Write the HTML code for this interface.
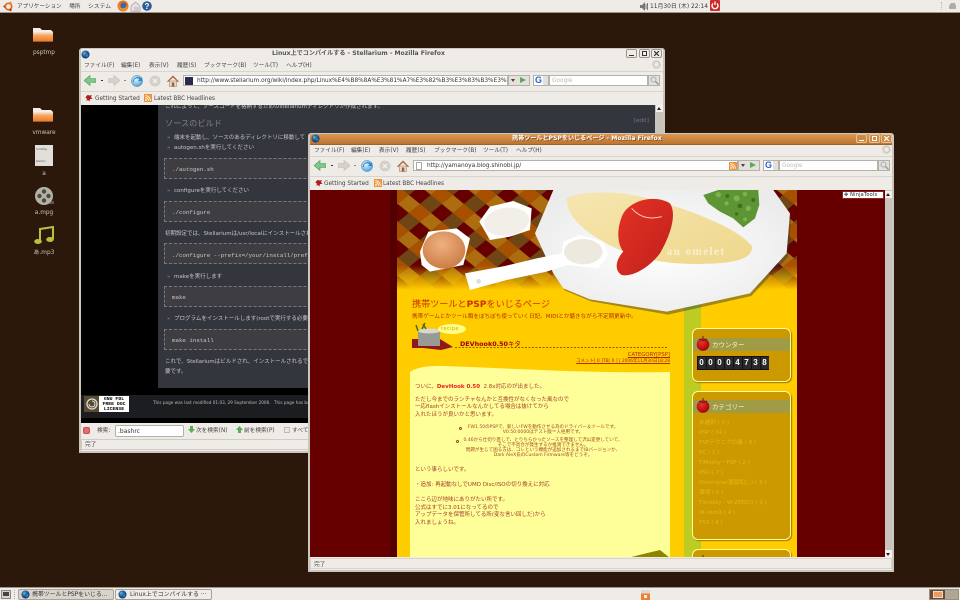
<!DOCTYPE html>
<html lang="ja"><head><meta charset="utf-8"><title>Desktop</title>
<style>
html,body{margin:0;padding:0;width:960px;height:600px;overflow:hidden;background:#2c170b}
body{position:relative;font-family:"DejaVu Sans","Noto Sans CJK JP",sans-serif;font-size:7px;color:#3c3c3c}
div,span,svg{box-sizing:border-box}
.a{position:absolute}
.t{position:absolute;white-space:nowrap;line-height:10px;height:10px;margin-top:1px}
.l{color:#c8c4bc;font-size:5.8px;text-align:center;width:50px}
.w{position:absolute;width:586px;background:#efebe7;overflow:hidden;border-radius:3px 3px 0 0;border:1px solid #cbc7c0;border-width:1px 2px 2px 2px}
.w .in{position:absolute;left:-2px;top:-1px;width:586px;height:100%}
.btn{position:absolute;top:1px;width:11px;height:9px;border:1px solid #9a958d;border-radius:2px;background:#efebe7}
.m{font-size:5.7px;color:#444}
.fld{position:absolute;background:#fff;border:1px solid #b5b0a8;height:11px}
.sep{position:absolute;left:2px;right:2px;height:1px;background:#d9d4cd}
.pr{position:absolute;left:83px;width:491px;background:#3e3e42;border:1px dashed #77777c;height:21px}
.c{color:#c6c6c6;font-size:5.5px}
.mo{font-family:"Liberation Mono",monospace;color:#c8c8c8;font-size:5.8px}
.b{color:#a23c2c;font-size:5.5px}
.s{color:#a2452c;font-size:4.55px;text-align:center;left:443px;width:200px}
.cat{color:#e8b80e;font-size:5.6px;left:699px}
.box{position:absolute;left:692px;width:99px;background:#cc9900;border:1.5px solid #ffff99;border-radius:6px;box-shadow:1px 1px 1px #a07800}
.band{position:absolute;left:693px;width:97px;height:13px;background:#a09c46}
.dg{position:absolute;top:357px;width:8px;height:12px;background:#2a2a2a;color:#fff;font:bold 8px/12px "Liberation Sans",sans-serif;text-align:center}
</style></head><body>
<svg width="0" height="0" style="position:absolute">
<defs>
<radialGradient id="gl" cx=".4" cy=".35" r=".7"><stop offset="0" stop-color="#3f8fe0"/><stop offset="1" stop-color="#062a70"/></radialGradient>
<radialGradient id="rg" cx=".4" cy=".35" r=".7"><stop offset="0" stop-color="#e8f4fb"/><stop offset="1" stop-color="#4a9bd4"/></radialGradient>
<linearGradient id="fo" x1="0" y1="0" x2="0" y2="1"><stop offset="0" stop-color="#f7e8d8"/><stop offset=".35" stop-color="#f6a763"/><stop offset="1" stop-color="#e87c28"/></linearGradient>
<radialGradient id="eg" cx=".45" cy=".35" r=".7"><stop offset="0" stop-color="#f0b080"/><stop offset="1" stop-color="#c87a42"/></radialGradient>
<radialGradient id="tm" cx=".4" cy=".35" r=".7"><stop offset="0" stop-color="#ee3030"/><stop offset="1" stop-color="#a00000"/></radialGradient>
<symbol id="globe" viewBox="0 0 10 10"><circle cx="5" cy="5" r="4.5" fill="url(#gl)"/><path d="M2 3l2-1 1 2-2 2zM6 6l2-1 0 2-2 1z" fill="#7cc07c" opacity=".6"/></symbol>
<symbol id="bk" viewBox="0 0 12 11"><path d="M0 5.5L6 .5v3h6v4H6v3z" fill="#7ec98a" stroke="#4a9a5c" stroke-width=".6"/></symbol>
<symbol id="fw" viewBox="0 0 12 11"><path d="M12 5.5L6 .5v3H0v4h6v3z" fill="#d6d2cb" stroke="#c0bbb3" stroke-width=".6"/></symbol>
<symbol id="rl" viewBox="0 0 12 12"><circle cx="6" cy="6" r="5.6" fill="url(#rg)" stroke="#3f8cc6" stroke-width=".5"/><path d="M3 7a3.2 3.2 0 0 1 5.6-2.6L7 6h4V2L9.6 3.2A4.6 4.6 0 0 0 2 7z" fill="#2f86c8"/></symbol>
<symbol id="st" viewBox="0 0 12 12"><circle cx="6" cy="6" r="5.5" fill="#d4d0c9"/><path d="M4 4l4 4M8 4l-4 4" stroke="#f2efea" stroke-width="1.4"/></symbol>
<symbol id="hm" viewBox="0 0 12 12"><path d="M2.5 6v5.5h7V6z" fill="#eadcc8" stroke="#94704a" stroke-width=".5"/><path d="M0 6.5L6 .5l6 6-1 .6L6 2.5 1 7.1z" fill="#b0603a"/><rect x="4.8" y="7.5" width="2.5" height="4" fill="#9a6236"/></symbol>
<symbol id="rss" viewBox="0 0 8 8"><rect width="8" height="8" rx="1" fill="#f09a3c" stroke="#c9803a" stroke-width=".4"/><circle cx="2" cy="6" r=".9" fill="#fff"/><path d="M1.2 3.4a3.5 3.5 0 0 1 3.4 3.4M1.2 1.6a5.2 5.2 0 0 1 5.2 5.2" stroke="#fff" stroke-width=".8" fill="none"/></symbol>
<symbol id="gs" viewBox="0 0 8 8"><path d="M1 2.5L2.5 1 5 1.5 7 1 6 3 7.5 5 5 5 4.5 7.5 3 6 1.5 7 2 4.5 .5 4z" fill="#b02020"/></symbol>
<symbol id="gear" viewBox="0 0 9 9"><circle cx="4.5" cy="4.5" r="3" fill="none" stroke="#cfcac3" stroke-width="1.5"/><circle cx="4.5" cy="4.5" r="4" fill="none" stroke="#cfcac3" stroke-width="1" stroke-dasharray="1.2 1"/></symbol>
<symbol id="fold" viewBox="0 0 20 16"><path d="M0 2h7l2 2h9l2 2v8.500H0z" fill="#f4eee6"/><rect y="6" width="20" height="9.500" fill="url(#fo)"/><rect y="15" width="20" height="1" fill="#a55818"/></symbol>
<symbol id="tom" viewBox="0 0 14 16"><circle cx="7" cy="9.500" r="6.300" fill="url(#tm)"/><path d="M7 1v3M3 4l4 1.500L11 4" stroke="#3c2a10" stroke-width=".9" fill="none"/></symbol>
<symbol id="ser" viewBox="0 0 11 11"><circle cx="4.500" cy="4.500" r="2.500" fill="none" stroke="#9fb0c4" stroke-width="1"/><path d="M6.500 6.500l3 3" stroke="#9a958d" stroke-width="1.300"/></symbol>
</defs></svg>

<!-- top panel -->
<div class="a" style="left:0;top:0;width:960px;height:13px;background:#efebe7;border-bottom:1px solid #9d968c"></div>
<svg class="a" style="left:3px;top:1px" width="11" height="11" viewBox="0 0 11 11"><circle cx="5.500" cy="5.500" r="3.200" fill="none" stroke="#dd6a1c" stroke-width="1.600"/><circle cx="1.500" cy="5.500" r="1.200" fill="#c94f12"/><circle cx="7.500" cy="2" r="1.200" fill="#e88a1c"/><circle cx="7.500" cy="9" r="1.200" fill="#c62a10"/></svg>
<div class="t m" style="left:17px;top:1px;font-size:5.6px;color:#3a3a3a">アプリケーション</div>
<div class="t m" style="left:69px;top:1px;font-size:5.8px">場所</div>
<div class="t m" style="left:88px;top:1px;font-size:5.8px">システム</div>
<svg class="a" style="left:117px;top:0" width="12" height="12" viewBox="0 0 12 12"><circle cx="6" cy="6" r="5.500" fill="#e8701c"/><circle cx="6.500" cy="5.500" r="3" fill="#3a68a8"/><path d="M1 7c1 3 5 5 8 3 2-1 2-4 1-5-1 3-4 4-6 3S2 6 3 3C1.500 4 1 5.500 1 7z" fill="#f09020"/></svg>
<svg class="a" style="left:130px;top:1px" width="11" height="11" viewBox="0 0 11 11"><path d="M1 5l4.500-4L10 5v5.500H1z" fill="#e6e1da" stroke="#9a93a0" stroke-width=".6"/><rect x="4" y="6" width="5" height="4" fill="#cfc8d8"/></svg>
<svg class="a" style="left:142px;top:1px" width="10" height="10" viewBox="0 0 10 10"><circle cx="5" cy="5" r="4.800" fill="#2a5c98"/><text x="5" y="8" text-anchor="middle" font-size="8" font-weight="bold" fill="#fff" font-family="Liberation Sans">?</text></svg>
<svg class="a" style="left:640px;top:2px" width="9" height="9" viewBox="0 0 9 9"><path d="M0 3h2l3-3v9L2 6H0z" fill="#777"/><path d="M6 2v5M7.500 1v7" stroke="#777"/></svg>
<div class="t m" style="left:650px;top:1px;font-size:5.9px;color:#3a3a3a">11月30日 (木) 22:14</div>
<div class="a" style="left:710px;top:0;width:10px;height:11px;background:#cf2a2a;border-radius:1px"></div>
<svg class="a" style="left:711px;top:1px" width="8" height="9" viewBox="0 0 8 9"><path d="M2 2.500a3 3 0 1 0 4 0" fill="none" stroke="#fff" stroke-width="1.400"/><path d="M4 .500v3.500" stroke="#fff" stroke-width="1.300"/></svg>
<div class="a" style="left:941px;top:2px;width:1px;height:8px;border-left:1px dotted #bbb"></div>
<svg class="a" style="left:948px;top:2px" width="9" height="8" viewBox="0 0 9 8"><path d="M1 7V4l2-3h4l1 3v3z" fill="#b0aca5"/></svg>

<!-- desktop icons -->
<svg class="a" style="left:33px;top:26px" width="20" height="16"><use href="#fold"/></svg>
<div class="t l" style="left:19px;top:47px">psptmp</div>
<svg class="a" style="left:33px;top:106px" width="20" height="16"><use href="#fold"/></svg>
<div class="t l" style="left:19px;top:127px">vmware</div>
<div class="a" style="left:35px;top:145px;width:18px;height:21px;background:#e2dfda;color:#555;font-size:3px;line-height:4px;padding:2px 1px">mnt/bg<br><br><br>teston</div>
<div class="t l" style="left:19px;top:168px">a</div>
<svg class="a" style="left:34px;top:187px" width="22" height="20" viewBox="0 0 22 20"><path d="M2 14h18v3H8z" fill="#555"/><circle cx="10" cy="9" r="9" fill="#b4b0a6"/><circle cx="10" cy="4.500" r="2.200" fill="#4a4a44"/><circle cx="5.500" cy="9" r="2.200" fill="#4a4a44"/><circle cx="14.500" cy="9" r="2.200" fill="#4a4a44"/><circle cx="10" cy="13.500" r="2.200" fill="#4a4a44"/></svg>
<div class="t l" style="left:19px;top:207px">a.mpg</div>
<svg class="a" style="left:34px;top:226px" width="20" height="19" viewBox="0 0 20 19"><path d="M6 15V3l13-2v12" fill="none" stroke="#b8c040" stroke-width="2"/><ellipse cx="4" cy="15.500" rx="3.800" ry="2.500" fill="#b8c040"/><ellipse cx="16" cy="13.500" rx="3.800" ry="2.500" fill="#b8c040"/></svg>
<div class="t l" style="left:19px;top:247px">あ.mp3</div>

<!-- window 1 -->
<div class="w" style="left:79px;top:48px;height:405px">
<div class="in">
<div class="a" style="left:0;top:0;width:586px;height:14px;background:#efebe7"></div>
<svg class="a" style="left:2px;top:2px" width="9" height="9"><use href="#globe"/></svg>
<div class="t" style="left:193px;top:0;font-size:6.1px;font-weight:bold;color:#555">Linux上でコンパイルする - Stellarium - Mozilla Firefox</div>
<div class="btn" style="left:547px"><div class="a" style="left:2px;top:5px;width:5px;height:1px;background:#333"></div></div>
<div class="btn" style="left:560px"><div class="a" style="left:2px;top:1px;width:5px;height:5px;border:1px solid #333"></div></div>
<div class="btn" style="left:572px"><svg class="a" style="left:2px;top:1px" width="6" height="5"><path d="M0 0l5 5M5 0L0 5" stroke="#333" stroke-width="1.200"/></svg></div>
<div class="t m" style="left:5px;top:12px">ファイル(F)</div><div class="t m" style="left:42px;top:12px">編集(E)</div><div class="t m" style="left:70px;top:12px">表示(V)</div><div class="t m" style="left:98px;top:12px">履歴(S)</div><div class="t m" style="left:125px;top:12px">ブックマーク(B)</div><div class="t m" style="left:174px;top:12px">ツール(T)</div><div class="t m" style="left:207px;top:12px">ヘルプ(H)</div>
<svg class="a" style="left:573px;top:12px" width="9" height="9"><use href="#gear"/></svg>
<div class="sep" style="top:23px"></div>
<svg class="a" style="left:5px;top:27px" width="12" height="11"><use href="#bk"/></svg>
<div class="a" style="left:22px;top:32px;width:2px;height:1px;background:#333"></div>
<svg class="a" style="left:29px;top:27px" width="12" height="11"><use href="#fw"/></svg>
<div class="a" style="left:45px;top:32px;width:2px;height:1px;background:#888"></div>
<svg class="a" style="left:52px;top:27px" width="12" height="12"><use href="#rl"/></svg>
<svg class="a" style="left:70px;top:27px" width="12" height="12"><use href="#st"/></svg>
<svg class="a" style="left:88px;top:27px" width="12" height="12"><use href="#hm"/></svg>
<div class="fld" style="left:104px;top:27px;width:325px;overflow:hidden">
<div class="a" style="left:1px;top:1px;width:8px;height:8px;background:#2a2a50"></div>
<div class="t" style="left:13px;top:-1px;font-size:5.8px;color:#333;line-height:10px">http://www.stellarium.org/wiki/index.php/Linux%E4%B8%8A%E3%81%A7%E3%82%B3%E3%83%B3%E3%83%91%E3%82%A4%E3%83%AB%E3%81%99%E3%82%8B</div></div>
<div class="a" style="left:429px;top:27px;width:22px;height:11px;background:#e4e0da;border:1px solid #b5b0a8"></div>
<div class="a" style="left:432px;top:31px;border:2px solid transparent;border-top:3px solid #444"></div>
<div class="a" style="left:441px;top:29px;border-left:6px solid #5aaa5a;border-top:3.500px solid transparent;border-bottom:3.500px solid transparent"></div>
<div class="a" style="left:454px;top:27px;width:16px;height:11px;background:#e4e0da;border:1px solid #b5b0a8"></div>
<div class="a" style="left:455px;top:28px;width:9px;height:9px;background:#fff"></div>
<div class="t" style="left:456px;top:26px;font:bold 9px/10px 'Liberation Sans';color:#2a62c8">G</div>
<div class="fld" style="left:470px;top:27px;width:99px"><div class="t" style="left:2px;top:-1px;font-size:5.800px;color:#bbb">Google</div></div>
<div class="a" style="left:569px;top:27px;width:12px;height:11px;background:#e4e0da;border:1px solid #b5b0a8"></div>
<svg class="a" style="left:570px;top:27px" width="11" height="11"><use href="#ser"/></svg>
<div class="sep" style="top:43px"></div>
<svg class="a" style="left:6px;top:46px" width="8" height="8"><use href="#gs"/></svg><div class="t m" style="left:16px;top:45px;font-size:5.800px">Getting Started</div>
<svg class="a" style="left:65px;top:46px" width="8" height="8"><use href="#rss"/></svg><div class="t m" style="left:75px;top:45px;font-size:5.700px">Latest BBC Headlines</div>

<div class="a" style="left:2px;top:57px;width:582px;height:318px;background:#000;overflow:hidden">
 <div class="a" style="left:77px;top:0;width:497px;height:283px;background:#33363c"></div>
 <div class="t c" style="left:84px;top:-4px">これによって、ソースコードを格納するためのstellariumディレクトリが作成されます。</div>
 <div class="t" style="left:84px;top:12px;font-size:8.200px;color:#808286">ソースのビルド</div>
 <div class="t" style="left:553px;top:10px;font-size:5.500px;color:#75759c">[edit]</div>
 <div class="t c" style="left:86px;top:27px;color:#888">»</div><div class="t c" style="left:93px;top:27px">端末を起動し、ソースのあるディレクトリに移動して</div>
 <div class="t c" style="left:86px;top:37px;color:#888">»</div><div class="t c" style="left:93px;top:37px">autogen.shを実行してください</div>
 <div class="pr" style="top:53px"></div><div class="t mo" style="left:91px;top:59px">./autogen.sh</div>
 <div class="t c" style="left:86px;top:80px;color:#888">»</div><div class="t c" style="left:93px;top:80px">configureを実行してください</div>
 <div class="pr" style="top:96px"></div><div class="t mo" style="left:91px;top:102px">./configure</div>
 <div class="t c" style="left:84px;top:123px">初期設定では、Stellariumは/usr/localにインストールされます。</div>
 <div class="pr" style="top:138px"></div><div class="t mo" style="left:91px;top:145px">./configure --prefix=/your/install/prefix</div>
 <div class="t c" style="left:86px;top:166px;color:#888">»</div><div class="t c" style="left:93px;top:166px">makeを実行します</div>
 <div class="pr" style="top:181px"></div><div class="t mo" style="left:91px;top:187px">make</div>
 <div class="t c" style="left:86px;top:208px;color:#888">»</div><div class="t c" style="left:93px;top:208px">プログラムをインストールします(rootで実行する必要があります)</div>
 <div class="pr" style="top:224px"></div><div class="t mo" style="left:91px;top:230px">make install</div>
 <div class="t c" style="left:84px;top:251px">これで、Stellariumはビルドされ、インストールされるでしょう。</div>
 <div class="t c" style="left:84px;top:261px">要です。</div>
 <div class="a" style="left:0;top:290px;width:574px;height:23px;background:#1b1d20"></div>
 <div class="a" style="left:3px;top:291px;width:45px;height:16px;background:#5a4a30"></div>
 <div class="a" style="left:18px;top:291px;width:30px;height:16px;background:#fff;color:#000;font:bold 4.800px/5px 'Liberation Mono',monospace;text-align:center;padding-top:1px">GNU FDL<br>FREE DOC<br>LICENSE</div>
 <svg class="a" style="left:5px;top:293px" width="12" height="12"><circle cx="6" cy="6" r="5" fill="none" stroke="#ddd" stroke-width="1.300"/><path d="M3 6a3 3 0 1 0 3-3" fill="none" stroke="#ddd"/></svg>
 <div class="t" style="left:72px;top:292px;font-size:4.200px;color:#bbb">This page was last modified 01:03, 29 September 2006.</div>
 <div class="t" style="left:193px;top:292px;font-size:4.200px;color:#bbb">This page has been accessed</div>
 <div class="a" style="left:574px;top:0;width:8px;height:318px;background:#c9c4bb"></div>
 <div class="a" style="left:575px;top:0;width:7px;height:7px;background:#f4f2ee"></div>
 <div class="a" style="left:576px;top:2px;border:2px solid transparent;border-bottom:3px solid #222;border-top:0"></div>
</div>
<!-- find bar -->
<div class="a" style="left:4px;top:379px;width:7px;height:7px;background:#e07070;border-radius:2px;border:1px solid #c85050"></div>
<div class="t m" style="left:18px;top:377px">検索:</div>
<div class="fld" style="left:36px;top:377px;width:69px;height:12px;border-radius:2px"><div class="t" style="left:2px;top:0;font-size:6px;color:#333">.bashrc</div></div>
<svg class="a" style="left:109px;top:378px" width="7" height="7"><path d="M2 0h3v3h2L3.500 7 0 3h2z" fill="#5aaa5a"/></svg>
<div class="t m" style="left:117px;top:377px">次を検索(N)</div>
<svg class="a" style="left:157px;top:378px" width="7" height="7"><path d="M2 7h3V4h2L3.500 0 0 4h2z" fill="#5aaa5a"/></svg>
<div class="t m" style="left:165px;top:377px">前を検索(P)</div>
<div class="a" style="left:205px;top:379px;width:6px;height:6px;background:#e8e8ee;border:1px solid #bbb"></div>
<div class="t m" style="left:213px;top:377px">すべて強調表示(A)</div>
<div class="a" style="left:2px;top:391px;width:582px;height:11px;border:1px solid #d0cbc3"></div>
<div class="t m" style="left:6px;top:391px">完了</div>
</div></div>

<!-- window 2 -->
<div class="w" style="left:308px;top:133px;height:439px;z-index:2">
<div class="in">
<div class="a" style="left:0;top:0;width:586px;height:11px;background:linear-gradient(#dc9c58,#bd7430)"></div>
<div class="a" style="left:0;top:11px;width:586px;height:1px;background:#99652d"></div>
<svg class="a" style="left:3px;top:1px" width="9" height="9"><use href="#globe"/></svg>
<div class="t" style="left:204px;top:0;font-size:6.100px;font-weight:bold;color:#fff;text-shadow:1px 1px 0 #8a5420">携帯ツールとPSPをいじるページ - Mozilla Firefox</div>
<div class="btn" style="left:548px;top:1px;background:#cc8a44;border-color:#e8c49c"><div class="a" style="left:2px;top:5px;width:5px;height:1px;background:#fff"></div></div>
<div class="btn" style="left:561px;top:1px;background:#cc8a44;border-color:#e8c49c"><div class="a" style="left:2px;top:1px;width:5px;height:5px;border:1px solid #fff"></div></div>
<div class="btn" style="left:573px;top:1px;background:#cc8a44;border-color:#e8c49c"><svg class="a" style="left:2px;top:1px" width="6" height="5"><path d="M0 0l5 5M5 0L0 5" stroke="#fff" stroke-width="1.200"/></svg></div>
<div class="t m" style="left:6px;top:12px">ファイル(F)</div><div class="t m" style="left:43px;top:12px">編集(E)</div><div class="t m" style="left:71px;top:12px">表示(V)</div><div class="t m" style="left:98px;top:12px">履歴(S)</div><div class="t m" style="left:126px;top:12px">ブックマーク(B)</div><div class="t m" style="left:175px;top:12px">ツール(T)</div><div class="t m" style="left:208px;top:12px">ヘルプ(H)</div>
<svg class="a" style="left:574px;top:12px" width="9" height="9"><use href="#gear"/></svg>
<div class="sep" style="top:23px"></div>
<svg class="a" style="left:6px;top:27px" width="12" height="11"><use href="#bk"/></svg>
<div class="a" style="left:23px;top:32px;width:2px;height:1px;background:#333"></div>
<svg class="a" style="left:30px;top:27px" width="12" height="11"><use href="#fw"/></svg>
<div class="a" style="left:46px;top:32px;width:2px;height:1px;background:#888"></div>
<svg class="a" style="left:53px;top:27px" width="12" height="12"><use href="#rl"/></svg>
<svg class="a" style="left:71px;top:27px" width="12" height="12"><use href="#st"/></svg>
<svg class="a" style="left:89px;top:27px" width="12" height="12"><use href="#hm"/></svg>
<div class="fld" style="left:105px;top:27px;width:325px">
<div class="a" style="left:2px;top:1px;width:6px;height:8px;background:#fff;border:1px solid #aaa"></div>
<div class="t" style="left:13px;top:-1px;font-size:5.800px;color:#333;line-height:10px">http://yamanoya.blog.shinobi.jp/</div>
<svg class="a" style="left:315px;top:1px" width="8" height="8"><use href="#rss"/></svg></div>
<div class="a" style="left:430px;top:27px;width:22px;height:11px;background:#e4e0da;border:1px solid #b5b0a8"></div>
<div class="a" style="left:433px;top:31px;border:2px solid transparent;border-top:3px solid #444"></div>
<div class="a" style="left:442px;top:29px;border-left:6px solid #5aaa5a;border-top:3.500px solid transparent;border-bottom:3.500px solid transparent"></div>
<div class="a" style="left:455px;top:27px;width:16px;height:11px;background:#e4e0da;border:1px solid #b5b0a8"></div>
<div class="a" style="left:456px;top:28px;width:9px;height:9px;background:#fff"></div>
<div class="t" style="left:457px;top:26px;font:bold 9px/10px 'Liberation Sans';color:#2a62c8">G</div>
<div class="fld" style="left:471px;top:27px;width:99px"><div class="t" style="left:2px;top:-1px;font-size:5.800px;color:#bbb">Google</div></div>
<div class="a" style="left:570px;top:27px;width:12px;height:11px;background:#e4e0da;border:1px solid #b5b0a8"></div>
<svg class="a" style="left:571px;top:27px" width="11" height="11"><use href="#ser"/></svg>
<div class="sep" style="top:43px"></div>
<svg class="a" style="left:7px;top:46px" width="8" height="8"><use href="#gs"/></svg><div class="t m" style="left:16px;top:45px;font-size:5.800px">Getting Started</div>
<svg class="a" style="left:66px;top:46px" width="8" height="8"><use href="#rss"/></svg><div class="t m" style="left:75px;top:45px;font-size:5.700px">Latest BBC Headlines</div>
<div class="a" style="left:2px;top:425px;width:582px;height:11px;border:1px solid #d8d3cb"></div>
<div class="t m" style="left:6px;top:426px">完了</div>
</div></div>

<!-- window 2 page content (page coords) -->
<div class="a" style="left:310px;top:190px;width:582px;height:367px;z-index:3;overflow:hidden;background:#660000">
<div style="position:absolute;left:-310px;top:-190px;width:960px;height:600px">
 <div class="a" style="left:390px;top:190px;width:7px;height:367px;background:#550000"></div>
 <div class="a" style="left:397px;top:190px;width:400px;height:367px;background:#ffcc00"></div>
 <div class="a" style="left:684px;top:300px;width:17px;height:257px;background:#bccc22"></div>
 <svg class="a" style="left:0;top:0" width="960" height="600">
  <defs>
   <pattern id="pl" width="2" height="2" patternUnits="userSpaceOnUse" patternTransform="matrix(11 9 11 -9 409 195)">
    <rect width="2" height="2" fill="#6e4514"/>
    <rect x="0" y="0" width="1" height="1" fill="#660000"/>
    <rect x="1" y="0" width="1" height="1" fill="#6e4514"/>
    <rect x="0" y="1" width="1" height="1" fill="#ab6d10"/>
    <rect x="1" y="1" width="1" height="1" fill="#a65000"/>
   </pattern>
   <linearGradient id="fade" x1="0" y1="0" x2="0" y2="1"><stop offset="0" stop-color="#ffcc00" stop-opacity="0"/><stop offset="1" stop-color="#ffcc00"/></linearGradient>
   <linearGradient id="om" x1="0" y1="0" x2="1" y2="1"><stop offset="0" stop-color="#f6e6b0"/><stop offset="1" stop-color="#efd78c"/></linearGradient>
   <radialGradient id="plg" cx=".5" cy=".5" r=".6"><stop offset="0" stop-color="#fff"/><stop offset="1" stop-color="#ebebeb"/></radialGradient>
   <linearGradient id="ket" x1="0" y1="0" x2="1" y2="1"><stop offset="0" stop-color="#e43226"/><stop offset="1" stop-color="#c0201a"/></linearGradient>
  </defs>
  <rect x="397" y="190" width="400" height="100" fill="url(#pl)"/>
  <rect x="397" y="265" width="400" height="25" fill="url(#fade)"/>
  <g transform="translate(390 190) scale(.3333)">
   <path d="M490 0L435 130 490 250 520 295 600 328 830 368 1080 312 1190 195 1200 70 1150 0z" fill="#333" opacity=".45" transform="translate(4 6)"/>
   <path d="M490 0L435 130 490 250 520 295 600 328 830 365 1080 310 1190 190 1200 70 1150 0z" fill="url(#plg)"/>
   <path d="M530 25C560 5 680 0 760 22 880 50 1050 115 1087 170 1087 205 1040 218 960 221 860 226 770 214 690 180 610 144 528 90 530 25z" fill="url(#om)"/>
   <path d="M700 70C730 25 800 15 840 40 860 70 845 130 810 190 780 230 730 262 695 255 670 240 680 205 700 185 680 160 680 110 700 70z" fill="url(#ket)"/>
   <path d="M725 55q35 40 90 25" stroke="#f4c8b8" stroke-width="3" fill="none"/>
   <path d="M940 15L985 0H1105L1108 45 1095 85 1060 112 1030 85 990 65 955 40z" fill="#5d9434"/>
   <g fill="#80b050"><circle cx="985" cy="14" r="8"/><circle cx="1040" cy="25" r="9"/><circle cx="1075" cy="55" r="8"/><circle cx="1065" cy="12" r="7"/><circle cx="1010" cy="40" r="6"/><circle cx="1065" cy="88" r="6"/></g>
   <g fill="#3f7022"><circle cx="1012" cy="18" r="6"/><circle cx="1050" cy="48" r="7"/><circle cx="1090" cy="30" r="6"/><circle cx="1040" cy="72" r="5"/></g>
   <path d="M268 95L300 50 370 33 425 55 420 120 360 140 300 150z" fill="#fff"/>
   <ellipse cx="350" cy="95" rx="68" ry="42" fill="#f1efe8" transform="rotate(-8 350 95)"/>
   <path d="M90 185L115 125 200 115 240 145 220 225 120 245 95 225z" fill="#fff"/>
   <ellipse cx="162" cy="180" rx="64" ry="56" fill="url(#eg)"/>
   <path d="M225 250L345 228 440 205 515 190 520 155 570 135 640 155 655 195 625 235 530 225 470 245 350 270 240 300z" fill="#fff"/>
   <ellipse cx="580" cy="185" rx="58" ry="38" fill="#eee9df"/>
   <circle cx="266" cy="274" r="7" fill="#ddd"/>
   <text x="830" y="195" font-family="Liberation Serif" font-size="34" font-weight="bold" letter-spacing="4" fill="#fff" opacity=".55">an omelet</text>
  </g>
  <!-- post note -->
  <path d="M410 372Q420 365 445 366T540 370 670 372V558H410z" fill="#ffff99"/>
  <path d="M627 558L660 550 670 558z" fill="#8a8600"/>
  <path d="M455 347.500H668" stroke="#7a3a00" stroke-dasharray="2 1.500" stroke-width=".8"/>
  <!-- pot -->
  <path d="M412 339h28l13 8-12 3-18-2-11 0z" fill="#901818"/>
  <rect x="418" y="331" width="22" height="15" fill="#9a9a94"/>
  <ellipse cx="429" cy="331" rx="11" ry="2.500" fill="#d8d8d0"/>
  <path d="M418 331l-2-6M422 329l3-6M426 329l-3-5" stroke="#4d6a20" stroke-width="1.500"/>
  <ellipse cx="452" cy="329" rx="14" ry="5" fill="#ffff88"/>
 </svg>
 <div class="t" style="left:441px;top:323px;font-size:5px;color:#d8a800;letter-spacing:.4px">recipe</div>
 <div class="t" style="left:412px;top:299px;font-size:9.100px;color:#cc3300">携帯ツールと<b>PSP</b>をいじるページ</div>
 <div class="t" style="left:412px;top:311px;font-size:5.600px;color:#b43000">携帯ゲームとかツール類をぼちぼち使っていく日記。MIDIとか聴きながら不定期更新中。</div>
 <div class="t" style="left:460px;top:338px;font-size:6.400px;color:#990000"><b>DEVhook0.50</b>キタ</div>
 <div class="t" style="left:570px;top:349px;width:100px;text-align:right;font-size:5.300px;color:#b03000;text-decoration:underline">CATEGORY[PSP]</div>
 <div class="t" style="left:540px;top:356px;width:130px;text-align:right;font-size:4.400px;color:#b03000;text-decoration:underline">コメント[ 0 ]TB[ 0 ] | 2006年11月30日18:28</div>

 <div class="t b" style="left:415px;top:381px">ついに、<b style="color:#ee2020">DevHook 0.50</b>&nbsp; 2.8x対応のが出ました。</div>
 <div class="t b" style="left:415px;top:394px">ただし今までのランチャなんかと互換性がなくなった風なので</div>
 <div class="t b" style="left:415px;top:401px">一応flashインストールなんかしてる場合は抜けてから</div>
 <div class="t b" style="left:415px;top:409px">入れたほうが良いかと思います。</div>
 <div class="t s" style="top:422px">FW1.50のPSPで、新しいFWを動作させる為のドライバー＆ツールです。</div>
 <div class="t s" style="top:427px">V0.50:0000はテスト版＝人柱用です。</div>
 <div class="t s" style="top:435px">0.46から仕切り直しで、とりちらかったソースを整理して沢山変更していて、</div>
 <div class="t s" style="top:440px">そこで不具合が発生するか推測できません。</div>
 <div class="t s" style="top:445px">問題が生じて困る方は、コレという機能が追加されるまでIBバージョンか、</div>
 <div class="t s" style="top:450px">Dark AleX氏のCustom Firmware等をどうぞ。</div>
 <div class="a" style="left:459px;top:427px;width:3px;height:3px;border:.7px solid #a2452c;border-radius:50%"></div>
 <div class="a" style="left:456px;top:440px;width:3px;height:3px;border:.7px solid #a2452c;border-radius:50%"></div>
 <div class="t b" style="left:415px;top:464px">という事らしいです。</div>
 <div class="t b" style="left:415px;top:479px">・追加: 再起動なしでUMD Disc/ISOの切り換えに対応</div>
 <div class="t b" style="left:415px;top:494px">ここら辺が地味にありがたい所です。</div>
 <div class="t b" style="left:415px;top:502px">公式はすでに3.01になってるので</div>
 <div class="t b" style="left:415px;top:509px">アップデータを保管所してる所(変な言い回しだ)から</div>
 <div class="t b" style="left:415px;top:517px">入れましょうね。</div>

 <div class="box" style="top:328px;height:54px"></div>
 <div class="band" style="top:338px"></div>
 <svg class="a" style="left:696px;top:335px" width="14" height="16"><use href="#tom"/></svg>
 <div class="t" style="left:712px;top:339px;font-size:6.500px;color:#f0eed8">カウンター</div>
 <div class="a" style="left:697px;top:356px;width:72px;height:14px;background:#111"></div>
 <div class="dg" style="left:697.500px">0</div><div class="dg" style="left:706.500px">0</div><div class="dg" style="left:715.500px">0</div><div class="dg" style="left:724.500px">0</div><div class="dg" style="left:733.500px">4</div><div class="dg" style="left:742.500px">7</div><div class="dg" style="left:751.500px">3</div><div class="dg" style="left:760.500px">8</div>

 <div class="box" style="top:391px;height:149px"></div>
 <div class="band" style="top:400px"></div>
 <svg class="a" style="left:696px;top:397px" width="14" height="16"><use href="#tom"/></svg>
 <div class="t" style="left:712px;top:401px;font-size:6.500px;color:#f0eed8">カテゴリー</div>
 <div class="t cat" style="top:417px">未選択 ( 0 )</div>
 <div class="t cat" style="top:427px">PSP ( 34 )</div>
 <div class="t cat" style="top:437px">PSPテクニクの裏 ( 9 )</div>
 <div class="t cat" style="top:447px">PC ( 1 )</div>
 <div class="t cat" style="top:457px">TiMidity－PSP ( 2 )</div>
 <div class="t cat" style="top:467px">PSU ( 7 )</div>
 <div class="t cat" style="top:477px">Onscripter奮闘記(;;) ( 3 )</div>
 <div class="t cat" style="top:487px">環境 ( 6 )</div>
 <div class="t cat" style="top:497px">Timidity - W-ZERO3 ( 2 )</div>
 <div class="t cat" style="top:507px">W-zero3 ( 4 )</div>
 <div class="t cat" style="top:517px">PS3 ( 4 )</div>

 <div class="box" style="top:549px;height:30px"></div>
 <svg class="a" style="left:696px;top:554px" width="14" height="16"><use href="#tom"/></svg>

 <div class="a" style="left:842px;top:191px;width:42px;height:8px;background:#fff;border:1px solid #8c2020"></div>
 <div class="t" style="left:844px;top:189px;font-size:5px;color:#222;letter-spacing:.2px">✥ NinjaTools</div>
 <div class="a" style="left:885px;top:190px;width:7px;height:367px;background:#c9c4bb"></div>
 <div class="a" style="left:885px;top:191px;width:7px;height:7px;background:#f4f2ee"></div>
 <div class="a" style="left:886px;top:193px;border:2px solid transparent;border-bottom:3px solid #222;border-top:0"></div>
 <div class="a" style="left:885px;top:550px;width:7px;height:7px;background:#f4f2ee"></div>
 <div class="a" style="left:886px;top:553px;border:2px solid transparent;border-top:3px solid #222;border-bottom:0"></div>
</div></div>

<!-- bottom panel -->
<div class="a" style="left:0;top:587px;width:960px;height:13px;background:#efebe7;border-top:1px solid #9d968c;z-index:4">
 <div class="a" style="left:1px;top:2px;width:10px;height:9px;background:#d6d1c9;border:1px solid #888"></div>
 <div class="a" style="left:3px;top:4px;width:6px;height:4px;background:#444"></div>
 <div class="a" style="left:14px;top:2px;width:1px;height:9px;border-left:1px dotted #aaa"></div>
 <div class="a" style="left:18px;top:1px;width:96px;height:11px;background:#d8d3cb;border:1px solid #a8a297;border-radius:2px"></div>
 <svg class="a" style="left:21px;top:2px" width="9" height="9"><use href="#globe"/></svg>
 <div class="t" style="left:32px;top:1px;font-size:5.900px;color:#333">携帯ツールとPSPをいじる...</div>
 <div class="a" style="left:115px;top:1px;width:97px;height:11px;background:#efebe7;border:1px solid #a8a297;border-radius:2px"></div>
 <svg class="a" style="left:118px;top:2px" width="9" height="9"><use href="#globe"/></svg>
 <div class="t" style="left:130px;top:1px;font-size:5.900px;color:#333">Linux上でコンパイルする ···</div>
 <svg class="a" style="left:641px;top:2px" width="9" height="10" viewBox="0 0 9 10"><rect y="3" width="9" height="7" fill="#ee8030"/><rect y="0" width="9" height="3.500" fill="#dedad3"/><rect x="3" y="5" width="3" height="3" fill="#fff3e0"/></svg>
 <div class="a" style="left:929px;top:1px;width:30px;height:11px;background:#b0a696;border:1px solid #998f80"></div>
 <div class="a" style="left:930px;top:2px;width:15px;height:9px;background:#6a4a35"></div>
 <div class="a" style="left:933px;top:3px;width:10px;height:7px;background:#f09a5c;border:1px solid #e8dccb"></div>
</div>
</body></html>
